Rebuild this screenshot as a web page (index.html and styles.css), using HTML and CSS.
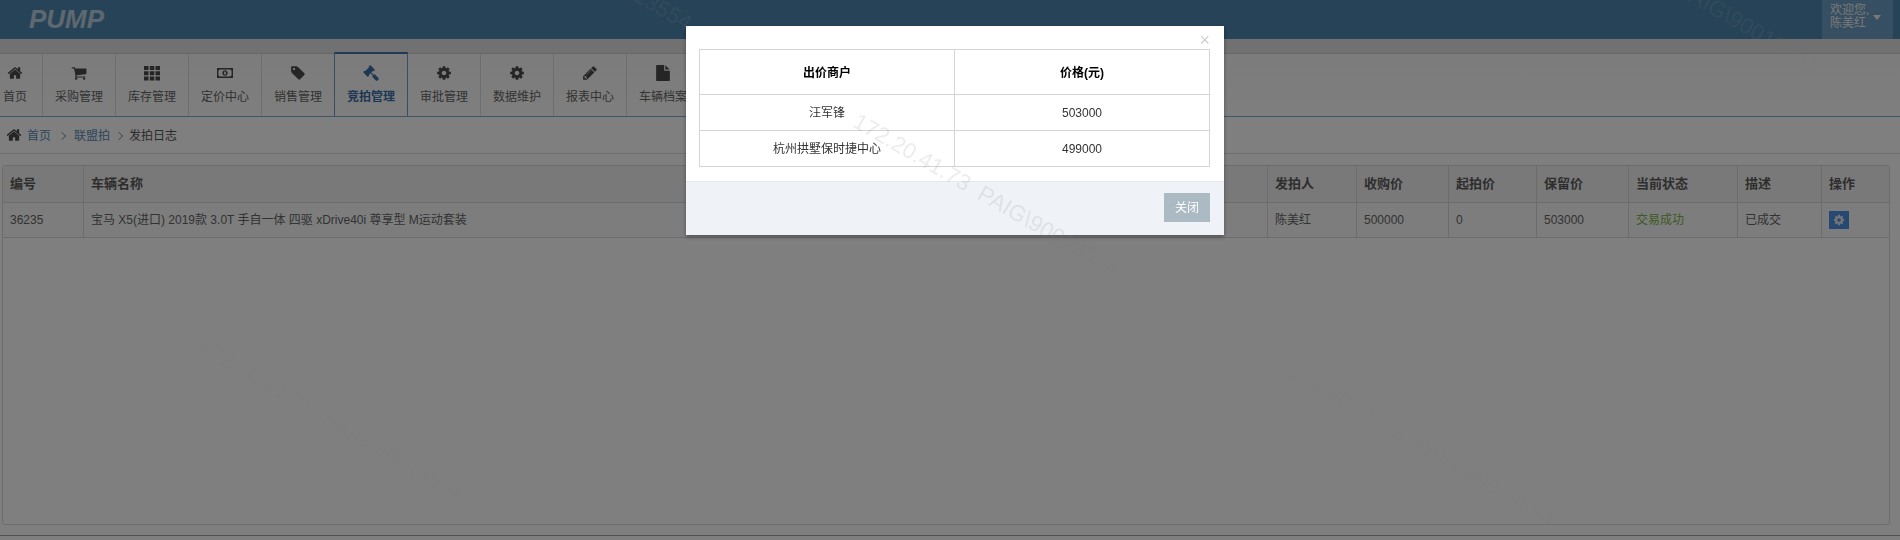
FILE: index.html
```html
<!DOCTYPE html>
<html lang="zh-CN">
<head>
<meta charset="utf-8">
<title>发拍日志</title>
<link rel="stylesheet" href="styles.css">
</head>
<body>
<svg class="defs" width="0" height="0" aria-hidden="true">
  <symbol id="i-home" viewBox="0 0 1792 1792"><path d="M1472 992v480q0 26-19 45t-45 19h-384v-384h-256v384h-384q-26 0-45-19t-19-45v-480q0-1 .5-3t.5-3l575-474 575 474q1 2 1 6zm223-69l-62 74q-8 9-21 11h-3q-13 0-21-7l-692-577-692 577q-12 8-24 7-13-2-21-11l-62-74q-8-10-7-23.500t11-21.500l719-599q32-26 76-26t76 26l244 204v-195q0-14 9-23t23-9h192q14 0 23 9t9 23v408l219 182q10 8 11 21.500t-7 23.500z"/></symbol>
  <symbol id="i-cart" viewBox="0 0 1792 1792"><path d="M704 1536q0 52-38 90t-90 38-90-38-38-90 38-90 90-38 90 38 38 90zm896 0q0 52-38 90t-90 38-90-38-38-90 38-90 90-38 90 38 38 90zm128-1088v512q0 24-16.500 42.500t-40.500 21.500l-1044 122q13 60 13 70 0 16-24 64h920q26 0 45 19t19 45-19 45-45 19h-1024q-26 0-45-19t-19-45q0-11 8-31.500t16-36 21.500-40 15.500-29.500l-177-823h-204q-26 0-45-19t-19-45 19-45 45-19h256q16 0 28.500 6.500t19.500 15.500 13 24.500 8 26 5.500 29.500 4.500 26h1201q26 0 45 19t19 45z"/></symbol>
  <symbol id="i-th" viewBox="0 0 16 16"><path d="M0 1h4.500v4H0zM5.800 1h4.500v4H5.800zM11.500 1H16v4h-4.500zM0 6.200h4.500v4H0zM5.800 6.200h4.500v4H5.800zM11.500 6.200H16v4h-4.500zM0 11.500h4.500v4H0zM5.800 11.500h4.500v4H5.800zM11.500 11.500H16v4h-4.500z"/></symbol>
  <symbol id="i-money" viewBox="0 0 18 16"><path fill-rule="evenodd" d="M0 2.500h18v11H0zM3 4.200L1.600 5.600v4.800L3 11.800h12l1.400-1.400V5.600L15 4.200zM9 4.800c1.800 0 3 1.400 3 3.200s-1.200 3.200-3 3.200S6 9.800 6 8s1.200-3.200 3-3.200zM9 6c-.6 0-1 .8-1 2s.4 2 1 2 1-.8 1-2-.4-2-1-2z"/></symbol>
  <symbol id="i-tag" viewBox="0 0 1792 1792"><path d="M576 448q0-53-37.500-90.500t-90.500-37.500-90.500 37.500-37.500 90.500 37.500 90.500 90.500 37.500 90.500-37.500 37.500-90.500zm1067 576q0 53-37 90l-491 492q-39 37-91 37-53 0-90-37l-715-716q-38-37-64.500-101t-26.500-117v-416q0-52 38-90t90-38h416q53 0 117 26.500t102 64.500l715 714q37 39 37 91z"/></symbol>
  <symbol id="i-gavel" viewBox="0 0 1792 1792"><path d="M1771 1536q0 53-37 90l-107 108q-39 37-91 37-53 0-90-37l-363-364q-38-36-38-90 0-53 43-96l-256-256-126 126q-14 14-34 14t-34-14q2 2 12.500 12t12.500 13 10 11.500 10 13.500 6 13.500 5.500 16.500 1.500 18q0 38-28 68-3 3-16.500 18t-19 20.500-18.500 16.500-22 15.500-22 9-26 4.500q-40 0-68-28l-408-408q-28-28-28-68 0-13 4.500-26t9-22 15.500-22 16.500-18.500 20.500-19 18-16.500q30-28 68-28 10 0 18 1.500t16.500 5.500 13.500 6 13.500 10 11.500 10 13 12.500 12 12.500q-14-14-14-34t14-34l348-348q14-14 34-14t34 14q-2-2-12.500-12t-12.500-13-10-11.500-10-13.500-6-13.500-5.500-16.500-1.500-18q0-38 28-68 3-3 16.500-18t19-20.500 18.500-16.500 22-15.500 22-9 26-4.500q40 0 68 28l408 408q28 28 28 68 0 13-4.500 26t-9 22-15.500 22-16.500 18.500-20.500 19-18 16.500q-30 28-68 28-10 0-18-1.500t-16.500-5.500-13.500-6-13.500-10-11.500-10-13-12.500-12-12.500q14 14 14 34t-14 34l-126 126 256 256q43-43 96-43 52 0 91 37l363 363q37 39 37 91z"/></symbol>
  <symbol id="i-cog" viewBox="0 0 1792 1792"><path d="M1152 896q0-106-75-181t-181-75-181 75-75 181 75 181 181 75 181-75 75-181zm512-109v222q0 12-8 23t-20 13l-185 28q-19 54-39 91 35 50 107 138 10 12 10 25t-9 23q-27 37-99 108t-94 71q-12 0-26-9l-138-108q-44 23-91 38-16 136-29 186-7 28-36 28h-222q-14 0-24.500-8.500t-11.500-21.500l-28-184q-49-16-90-37l-141 107q-10 9-25 9-14 0-25-11-126-114-165-168-7-10-7-23 0-12 8-23 15-21 51-66.500t54-70.500q-27-50-41-99l-183-27q-13-2-21-12.500t-8-23.500v-222q0-12 8-23t19-13l186-28q14-46 39-92-40-57-107-138-10-12-10-24 0-10 9-23 26-36 98.500-107.500t94.500-71.500q13 0 26 10l138 107q44-23 91-38 16-136 29-186 7-28 36-28h222q14 0 24.500 8.500t11.500 21.500l28 184q49 16 90 37l142-107q9-9 24-9 13 0 25 10 129 119 165 170 7 8 7 22 0 12-8 23-15 21-51 66.500t-54 70.500q26 50 41 98l183 28q13 2 21 12.500t8 23.500z"/></symbol>
  <symbol id="i-pencil" viewBox="0 0 1792 1792"><path d="M491 1536l91-91-235-235-91 91v107h128v128h107zm523-928q0-22-22-22-10 0-17 7l-542 542q-7 7-7 17 0 22 22 22 10 0 17-7l542-542q7-7 7-17zm-54-192l416 416-832 832h-416v-416zm683 96q0 53-37 90l-166 166-416-416 166-165q36-38 90-38 53 0 91 38l235 234q37 39 37 91z"/></symbol>
  <symbol id="i-file" viewBox="0 0 1536 1792"><path d="M1024 512V40q22 14 36 28l408 408q14 14 28 36h-472zm-128 32q0 40 28 68t68 28h544v1056q0 40-28 68t-68 28H96q-40 0-68-28t-28-68V96q0-40 28-68t68-28h800v544z"/></symbol>
</svg>

<header class="topbar">
  <div class="logo">PUMP</div>
  <div class="user">
    <div class="user-text"><div>欢迎您,</div><div>陈美红</div></div>
    <span class="caret"></span>
  </div>
</header>

<nav class="menu">
  <a class="menu-item menu-first"><svg class="menu-icon"><use href="#i-home"/></svg><span>首页</span></a>
  <a class="menu-item"><svg class="menu-icon"><use href="#i-cart"/></svg><span>采购管理</span></a>
  <a class="menu-item"><svg class="menu-icon"><use href="#i-th"/></svg><span>库存管理</span></a>
  <a class="menu-item"><svg class="menu-icon"><use href="#i-money"/></svg><span>定价中心</span></a>
  <a class="menu-item"><svg class="menu-icon"><use href="#i-tag"/></svg><span>销售管理</span></a>
  <a class="menu-item menu-active"><svg class="menu-icon"><use href="#i-gavel"/></svg><span>竞拍管理</span></a>
  <a class="menu-item"><svg class="menu-icon"><use href="#i-cog"/></svg><span>审批管理</span></a>
  <a class="menu-item"><svg class="menu-icon"><use href="#i-cog"/></svg><span>数据维护</span></a>
  <a class="menu-item"><svg class="menu-icon"><use href="#i-pencil"/></svg><span>报表中心</span></a>
  <a class="menu-item"><svg class="menu-icon"><use href="#i-file"/></svg><span>车辆档案</span></a>
</nav>

<div class="crumbs">
  <svg class="crumb-home"><use href="#i-home"/></svg>
  <a class="crumb-link">首页</a>
  <span class="sep sep-wide"></span>
  <a class="crumb-link">联盟拍</a>
  <span class="sep"></span>
  <span class="crumb-current">发拍日志</span>
</div>

<main class="panel">
  <table class="log">
    <colgroup>
      <col class="c-id"><col class="c-name"><col class="c-user"><col class="c-buy"><col class="c-start"><col class="c-keep"><col class="c-state"><col class="c-desc"><col class="c-op">
    </colgroup>
    <thead>
      <tr><th>编号</th><th>车辆名称</th><th>发拍人</th><th>收购价</th><th>起拍价</th><th>保留价</th><th>当前状态</th><th>描述</th><th>操作</th></tr>
    </thead>
    <tbody>
      <tr>
        <td>36235</td>
        <td>宝马 X5(进口) 2019款 3.0T 手自一体 四驱 xDrive40i 尊享型 M运动套装</td>
        <td>陈美红</td>
        <td>500000</td>
        <td>0</td>
        <td>503000</td>
        <td class="ok">交易成功</td>
        <td>已成交</td>
        <td><button class="op-btn"><svg class="op-icon"><use href="#i-cog"/></svg></button></td>
      </tr>
    </tbody>
  </table>
</main>
<div class="page-foot"></div>

<div class="backdrop"></div>

<section class="modal">
  <div class="modal-body">
    <span class="modal-x">×</span>
    <table class="bids">
      <thead><tr><th>出价商户</th><th>价格(元)</th></tr></thead>
      <tbody>
        <tr><td>汪军锋</td><td>503000</td></tr>
        <tr><td>杭州拱墅保时捷中心</td><td>499000</td></tr>
      </tbody>
    </table>
  </div>
  <div class="modal-foot"><button class="close-btn">关闭</button></div>
</section>

<div class="wm wm-a">172.20.41.73&nbsp;&nbsp;PAIG\90013554</div>
<div class="wm wm-b">172.20.41.73&nbsp;&nbsp;PAIG\90013554</div>
<div class="wm wm-c">172.20.41.73&nbsp;&nbsp;PAIG\90013554</div>
<div class="wm wm-d">172.20.41.73&nbsp;&nbsp;PAIG\90013554</div>
<div class="wm wm-e">172.20.41.73&nbsp;&nbsp;PAIG\90013554</div>
</body>
</html>
```
FILE: styles.css
```css
* { box-sizing: border-box; }
html, body { margin: 0; height: 540px; overflow: hidden; }
body {
  background: #fff;
  color: #666;
  font: 12px/16px "Liberation Sans", "Noto Sans CJK SC", sans-serif;
}
.defs { position: absolute; }

.topbar {
  height: 39px;
  background: #4e86ae;
  display: flex;
  justify-content: space-between;
  padding: 0 7px 0 29px;
}
.logo {
  font: italic bold 26px/38px "Liberation Sans", sans-serif;
  color: #fff;
  opacity: .62;
}
.user {
  width: 71px;
  background: #6f9fc6;
  color: #f0f0f0;
  padding: 4px 0 0 8px;
  display: flex;
  align-items: flex-start;
  line-height: 13px;
}
.user-text { width: 36px; white-space: nowrap; }
.caret {
  margin: 11px 0 0 7px;
  border-top: 5px solid #f0f0f0;
  border-left: 4px solid transparent;
  border-right: 4px solid transparent;
}

.menu {
  margin-top: 14px;
  height: 64px;
  display: flex;
  background: linear-gradient(#f8f8f8, #fdfdfd);
  border-top: 1px solid #cfcfcf;
  border-bottom: 1px solid #7fb0cf;
  box-shadow: 0 -14px 0 0 #e2e2e2;
}
.menu-item {
  width: 73px;
  flex: none;
  padding-top: 11px;
  border-right: 1px solid #dddddd;
  display: flex;
  flex-direction: column;
  align-items: center;
  color: #666;
}
.menu-item span { margin-top: 8px; white-space: nowrap; }
.menu-first { width: 55px; margin-left: -12px; }
.menu-icon { width: 16px; height: 16px; fill: #4a4a4a; flex: none; }
.menu-active {
  margin-top: -2px;
  border-top: 2px solid #3f76ad;
  border-right-color: #6f9cc0;
  box-shadow: -1px 0 0 #6f9cc0;
  color: #3a6fa8;
  font-weight: 600;
}
.menu-active .menu-icon { fill: #3a6fa8; }

.crumbs {
  height: 37px;
  padding: 2px 0 0 6px;
  display: flex;
  align-items: center;
  border-bottom: 1px solid #e0e0e0;
  white-space: nowrap;
}
.crumb-home { width: 16px; height: 16px; fill: #4a4a4a; margin: -2px 5px 0 0; flex: none; }
.crumb-link { color: #5e8bb8; }
.crumb-current { color: #555; }
.sep {
  width: 19px;
  display: flex;
  justify-content: center;
}
.sep::before {
  content: "";
  width: 5px;
  height: 5px;
  margin-right: 2px;
  border-top: 1px solid #a8a8a8;
  border-right: 1px solid #a8a8a8;
  transform: rotate(45deg);
}
.sep-wide { width: 23px; }

.panel {
  margin: 11px 0 0 2px;
  width: 1888px;
  height: 360px;
  border: 1px solid #d8d8d8;
  border-radius: 3px;
}
.log { width: 1886px; table-layout: fixed; border-collapse: separate; border-spacing: 0; }
.c-id { width: 81px; }
.c-name { width: 1184px; }
.c-user { width: 89px; }
.c-buy { width: 92px; }
.c-start { width: 88px; }
.c-keep { width: 92px; }
.c-state { width: 109px; }
.c-desc { width: 84px; }
.c-op { width: 67px; }
.log th, .log td {
  padding: 0 0 0 7px;
  border-right: 1px solid #d8d8d8;
  border-bottom: 1px solid #d8d8d8;
  text-align: left;
  white-space: nowrap;
}
.log th:last-child, .log td:last-child { border-right: 0; }
.log th { height: 37px; font-size: 13px; font-weight: 600; color: #5c5c5c; background: #f3f3f3; }
.log td { height: 35px; background: #fafafa; }
.log .ok { color: #7ab648; }
.op-btn {
  width: 20px;
  height: 18px;
  padding: 0;
  border: 0;
  background: #4b93e6;
  display: flex;
  align-items: center;
  justify-content: center;
}
.op-icon { width: 12px; height: 12px; fill: #e8e8e8; }

.page-foot { margin-top: 10px; height: 1px; background: #9e9e9e; }

.backdrop { position: fixed; inset: 0; background: rgba(0, 0, 0, .5); }

.modal {
  position: fixed;
  left: 686px;
  top: 26px;
  width: 538px;
  background: #fff;
  box-shadow: 0 2px 4px rgba(0, 0, 0, .35);
  color: #333;
}
.modal-body { position: relative; padding: 23px 14px 14px 13px; }
.modal-x {
  position: absolute;
  right: 14px;
  top: 6px;
  font: 18px/16px "Liberation Sans", sans-serif;
  color: #cfcfcf;
}
.bids { width: 511px; table-layout: fixed; border-collapse: collapse; text-align: center; }
.bids th, .bids td { border: 1px solid #d5d5d5; padding: 0; }
.bids th { height: 45px; padding-top: 1px; color: #000; font-weight: 700; }
.bids td { height: 36px; }
.modal-foot {
  height: 54px;
  background: #eff3f8;
  border-top: 1px solid #e4e9ee;
  padding: 11px 14px 0 0;
  display: flex;
  justify-content: flex-end;
  align-items: flex-start;
}
.close-btn {
  width: 46px;
  height: 29px;
  border: 0;
  padding: 0;
  background: #abbac3;
  color: #fff;
  font: inherit;
}

.wm {
  position: fixed;
  font: 22.500px/26px "Liberation Sans", sans-serif;
  color: rgba(122, 122, 122, .14);
  white-space: nowrap;
  transform: rotate(30deg);
  transform-origin: 0 50%;
  pointer-events: none;
}
.wm-a { left: 855px; top: 107px; }
.wm-b { left: 428px; top: -139px; }
.wm-c { left: 1555px; top: -97px; }
.wm-d { left: 200px; top: 332px; }
.wm-e { left: 1290px; top: 357px; }
```
